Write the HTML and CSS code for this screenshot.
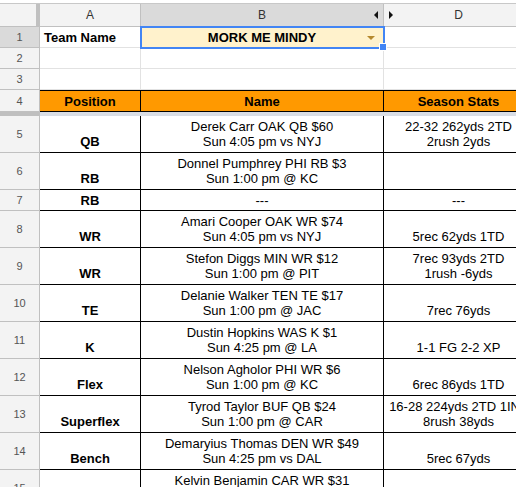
FILE: index.html
```html
<!DOCTYPE html>
<html lang="en">
<head>
<meta charset="UTF-8">
<title>Fantasy Lineup — Sheet</title>
<link rel="stylesheet" href="styles.css">
</head>
<body>
<div class="sheet">
  <div class="topstrip"></div>

  <div class="row colheads">
    <div class="corner"></div>
    <div class="colhead">A</div>
    <div class="colhead selected">B<span class="arrow-left"></span></div>
    <div class="colhead">D<span class="arrow-right"></span></div>
  </div>

  <div class="row small">
    <div class="rownum selected">1</div>
    <div class="cell grid bold left">Team Name</div>
    <div class="cell grid bold active">MORK ME MINDY<span class="dropdown"></span><span class="handle"></span></div>
    <div class="cell grid"></div>
  </div>
  <div class="row small">
    <div class="rownum">2</div>
    <div class="cell grid"></div>
    <div class="cell grid"></div>
    <div class="cell grid"></div>
  </div>
  <div class="row small">
    <div class="rownum">3</div>
    <div class="cell grid"></div>
    <div class="cell grid"></div>
    <div class="cell grid"></div>
  </div>

  <div class="row heading">
    <div class="rownum">4</div>
    <div class="cell head">Position</div>
    <div class="cell head">Name</div>
    <div class="cell head">Season Stats</div>
  </div>

  <div class="row freeze">
    <div class="freeze-num"></div>
    <div class="freeze-bar"></div>
  </div>

  <div class="row tall">
    <div class="rownum">5</div>
    <div class="cell data bold">QB</div>
    <div class="cell data"><span>Derek Carr OAK QB $60</span><span>Sun 4:05 pm vs NYJ</span></div>
    <div class="cell data"><span>22-32 262yds 2TD</span><span>2rush 2yds</span></div>
  </div>
  <div class="row tall">
    <div class="rownum">6</div>
    <div class="cell data bold">RB</div>
    <div class="cell data"><span>Donnel Pumphrey PHI RB $3</span><span>Sun 1:00 pm @ KC</span></div>
    <div class="cell data"></div>
  </div>
  <div class="row small">
    <div class="rownum">7</div>
    <div class="cell data bold">RB</div>
    <div class="cell data">---</div>
    <div class="cell data">---</div>
  </div>
  <div class="row tall">
    <div class="rownum">8</div>
    <div class="cell data bold">WR</div>
    <div class="cell data"><span>Amari Cooper OAK WR $74</span><span>Sun 4:05 pm vs NYJ</span></div>
    <div class="cell data"><span>5rec 62yds 1TD</span></div>
  </div>
  <div class="row tall">
    <div class="rownum">9</div>
    <div class="cell data bold">WR</div>
    <div class="cell data"><span>Stefon Diggs MIN WR $12</span><span>Sun 1:00 pm @ PIT</span></div>
    <div class="cell data"><span>7rec 93yds 2TD</span><span>1rush -6yds</span></div>
  </div>
  <div class="row tall">
    <div class="rownum">10</div>
    <div class="cell data bold">TE</div>
    <div class="cell data"><span>Delanie Walker TEN TE $17</span><span>Sun 1:00 pm @ JAC</span></div>
    <div class="cell data"><span>7rec 76yds</span></div>
  </div>
  <div class="row tall">
    <div class="rownum">11</div>
    <div class="cell data bold">K</div>
    <div class="cell data"><span>Dustin Hopkins WAS K $1</span><span>Sun 4:25 pm @ LA</span></div>
    <div class="cell data"><span>1-1 FG 2-2 XP</span></div>
  </div>
  <div class="row tall">
    <div class="rownum">12</div>
    <div class="cell data bold">Flex</div>
    <div class="cell data"><span>Nelson Agholor PHI WR $6</span><span>Sun 1:00 pm @ KC</span></div>
    <div class="cell data"><span>6rec 86yds 1TD</span></div>
  </div>
  <div class="row tall">
    <div class="rownum">13</div>
    <div class="cell data bold">Superflex</div>
    <div class="cell data"><span>Tyrod Taylor BUF QB $24</span><span>Sun 1:00 pm @ CAR</span></div>
    <div class="cell data"><span>16-28 224yds 2TD 1INT</span><span>8rush 38yds</span></div>
  </div>
  <div class="row tall">
    <div class="rownum">14</div>
    <div class="cell data bold">Bench</div>
    <div class="cell data"><span>Demaryius Thomas DEN WR $49</span><span>Sun 4:25 pm vs DAL</span></div>
    <div class="cell data"><span>5rec 67yds</span></div>
  </div>
  <div class="row tall">
    <div class="rownum">15</div>
    <div class="cell data bold"></div>
    <div class="cell data"><span>Kelvin Benjamin CAR WR $31</span><span>Sun 1:00 pm vs DEN</span></div>
    <div class="cell data"></div>
  </div>
</div>
</body>
</html>
```

FILE: styles.css
```css
body {
  margin: 0;
  width: 516px;
  height: 487px;
  overflow: hidden;
  background: #fff;
  font-family: "Liberation Sans", Arial, sans-serif;
  font-size: 13px;
  color: #000;
}

.sheet {
  width: 534px;
}

.topstrip {
  height: 3px;
  background: #fff;
  border-bottom: 1px solid #c8c8c8;
}

.row {
  display: grid;
  grid-template-columns: 40px 101px 243px 150px;
}

.row.small { height: 21px; }
.row.tall { height: 37px; }
.row.heading { height: 22px; }
.row.freeze { height: 4px; }

/* column headers */
.colheads {
  height: 23px;
}

.corner {
  background: #f3f3f3;
  border-right: 4px solid #c0c0c0;
  border-bottom: 1px solid #c0c0c0;
  box-sizing: border-box;
}

.colhead {
  position: relative;
  display: flex;
  align-items: center;
  justify-content: center;
  background: #f3f3f3;
  border-right: 1px solid #c0c0c0;
  border-bottom: 1px solid #c0c0c0;
  font-size: 12px;
  color: #333;
}

.colhead.selected {
  background: #dadada;
}

.arrow-left {
  position: absolute;
  right: 5px;
  top: 7px;
  border-right: 4px solid #111;
  border-top: 4px solid transparent;
  border-bottom: 4px solid transparent;
}

.arrow-right {
  position: absolute;
  left: 5px;
  top: 7px;
  border-left: 4px solid #111;
  border-top: 4px solid transparent;
  border-bottom: 4px solid transparent;
}

/* row numbers */
.rownum {
  display: flex;
  align-items: center;
  justify-content: center;
  background: #f3f3f3;
  border-right: 1px solid #c0c0c0;
  border-bottom: 1px solid #c0c0c0;
  font-size: 11px;
  color: #555;
}

.rownum.selected {
  background: #dadada;
}

.freeze-num {
  background: #bfbfbf;
}

.freeze-bar {
  grid-column: 2 / 5;
  background: #d9dde4;
}

/* cells */
.cell {
  display: flex;
  flex-direction: column;
  justify-content: flex-end;
  align-items: center;
  padding: 0 3px 3px;
  line-height: 15px;
  white-space: nowrap;
  box-sizing: border-box;
}

.small .cell {
  padding-bottom: 2px;
}

.cell.grid {
  border-right: 1px solid #e2e2e2;
  border-bottom: 1px solid #e2e2e2;
}

.cell.left {
  align-items: flex-start;
  padding-left: 4px;
}

.bold {
  font-weight: bold;
}

.cell.active {
  position: relative;
  background: #fff2cc;
  outline: 2px solid #4285f4;
  outline-offset: -1px;
}

.dropdown {
  position: absolute;
  right: 8px;
  top: 9px;
  border-top: 4px solid #b5892e;
  border-left: 4px solid transparent;
  border-right: 4px solid transparent;
}

.handle {
  position: absolute;
  right: -4px;
  bottom: -4px;
  width: 6px;
  height: 6px;
  background: #4285f4;
  border: 1px solid #fff;
  z-index: 2;
}

.cell.head {
  background: #ff9900;
  font-weight: bold;
  border-top: 1px solid #000;
  border-right: 1px solid #000;
  border-bottom: 1px solid #000;
  padding-bottom: 2px;
}

.cell.data {
  border-right: 1px solid #000;
  border-bottom: 1px solid #000;
}
```
